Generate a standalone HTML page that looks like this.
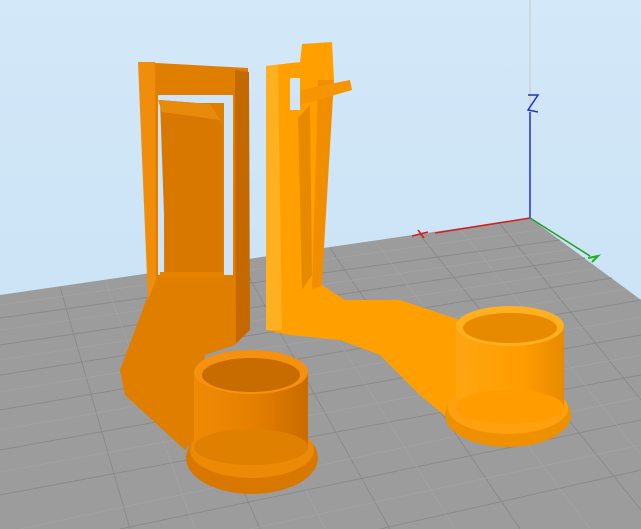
<!DOCTYPE html><html><head><style>html,body{margin:0;padding:0;width:641px;height:529px;overflow:hidden;background:#cfe5f7}</style></head><body>
<svg width="641" height="529" viewBox="0 0 641 529" xmlns="http://www.w3.org/2000/svg">
<defs>
<linearGradient id="bg" x1="0" y1="0" x2="0" y2="1"><stop offset="0" stop-color="#d3e8f8"/><stop offset="1" stop-color="#c6e0f5"/></linearGradient>
<linearGradient id="cupL" x1="0" y1="0" x2="1" y2="0"><stop offset="0" stop-color="#f08a05"/><stop offset=".5" stop-color="#e58000"/><stop offset="1" stop-color="#c96b00"/></linearGradient>
<linearGradient id="cupR" x1="0" y1="0" x2="1" y2="0"><stop offset="0" stop-color="#ffa510"/><stop offset=".6" stop-color="#ff9d00"/><stop offset="1" stop-color="#e88a00"/></linearGradient>
</defs>
<rect width="641" height="529" fill="url(#bg)"/>
<polygon points="0,295 530,218 641,300 641,529 0,529" fill="#9c9c9c"/>
<g stroke="#8a8a8a" stroke-width="1" fill="none">
<path d="M0,318 L560,240 M0,345 L585,258 M0,375 L612,278 M0,410 L641,300 M0,450 L641,335 M0,495 L641,375 M120,529 L641,420 M380,529 L641,470"/>
<path d="M60,287 L130,529 M150,274 L260,529 M240,261 L390,529 M330,248 L520,529 M420,235 L641,510 M500,224 L641,400"/>
</g>
<g stroke="#a8a8a8" stroke-width=".6" fill="none" opacity=".8">
<path d="M0,305 L545,229 M0,330 L572,249 M0,360 L598,268 M0,392 L626,289 M0,430 L641,317 M0,472 L641,355 M20,529 L641,397 M250,529 L641,445"/>
<path d="M105,280 L195,529 M195,267 L325,529 M285,254 L455,529 M375,241 L590,529 M460,229 L641,455"/>
</g>
<line x1="530" y1="0" x2="530" y2="218" stroke="#c8c8c8" stroke-width="1"/>
<line x1="530" y1="112" x2="530" y2="218" stroke="#2030d0" stroke-width="1.5"/>
<path d="M528,95 L538,95 L528,110 L538,112" stroke="#2030d0" stroke-width="1.5" fill="none"/>
<line x1="530" y1="218" x2="435" y2="233" stroke="#d02020" stroke-width="1.5"/>
<path d="M412,236 L428,232 M418,230 L424,238" stroke="#d02020" stroke-width="1.5"/>
<line x1="530" y1="218" x2="590" y2="256" stroke="#20a020" stroke-width="1.5"/>
<path d="M588,258 L598,256 L592,262" stroke="#20b020" stroke-width="2" fill="none"/>
<!-- left part -->
<path d="M138,62 L248,68 L250,330 L235,345 L205,355 L195,440 L185,450 L125,395 L120,370 L135,330 L150,290 L140,65Z" fill="#e07e00"/>
<path d="M138,62 L155,62 L156,280 L148,300 Z" fill="#f08d0a"/>
<path d="M235,70 L249,72 L250,330 L236,343 Z" fill="#c46900"/>
<rect x="158" y="95" width="75" height="8" fill="#cfe5f7"/>
<rect x="224" y="103" width="9" height="172" fill="#cfe5f7"/>
<rect x="158" y="103" width="6" height="172" fill="#cfe5f7"/>
<path d="M160,100 L210,104 L222,125 L222,272 L166,272 Z" fill="#d87800"/>
<path d="M158,100 L210,104 L220,120 L162,112Z" fill="#e88a0a"/>
<rect x="160" y="272" width="64" height="6" fill="#e58200"/>
<!-- left cup -->
<ellipse cx="252" cy="458" rx="66" ry="36" fill="#d97800"/>
<ellipse cx="252" cy="450" rx="62" ry="28" fill="#ec8a05"/>
<rect x="194" y="372" width="114" height="75" fill="url(#cupL)"/>
<ellipse cx="251" cy="447" rx="57" ry="18" fill="#e08000"/>
<ellipse cx="251" cy="372" rx="57" ry="22" fill="#f59010"/>
<ellipse cx="251" cy="375" rx="49" ry="17" fill="#c86c00"/>
<!-- right part -->
<path d="M266,66 L300,62 L302,44 L332,42 L334,80 L330,90 L322,230 L322,285 L345,300 L400,300 L430,310 L460,320 L470,400 L450,420 L420,395 L380,355 L340,340 L290,335 L266,330 Z" fill="#ffa000"/>
<path d="M266,66 L278,65 L282,330 L266,330Z" fill="#ffb020"/>
<path d="M318,80 L334,80 L325,230 L322,285 L312,290Z" fill="#f08e00"/>
<rect x="290" y="78" width="10" height="32" fill="#cfe5f7"/>
<path d="M300,90 L350,80 L352,90 L300,105Z" fill="#f59600"/>
<path d="M298,118 L310,105 L312,275 L302,290 Z" fill="#e88a00"/>
<!-- right cup -->
<ellipse cx="508" cy="415" rx="63" ry="32" fill="#ef9000"/>
<ellipse cx="508" cy="408" rx="60" ry="26" fill="#ffa010"/>
<rect x="456" y="325" width="108" height="82" fill="url(#cupR)"/>
<ellipse cx="510" cy="407" rx="54" ry="17" fill="#ff9d00"/>
<ellipse cx="510" cy="326" rx="54" ry="20" fill="#ffb020"/>
<ellipse cx="510" cy="328" rx="47" ry="15" fill="#e88a00"/>
</svg>
</body></html>
